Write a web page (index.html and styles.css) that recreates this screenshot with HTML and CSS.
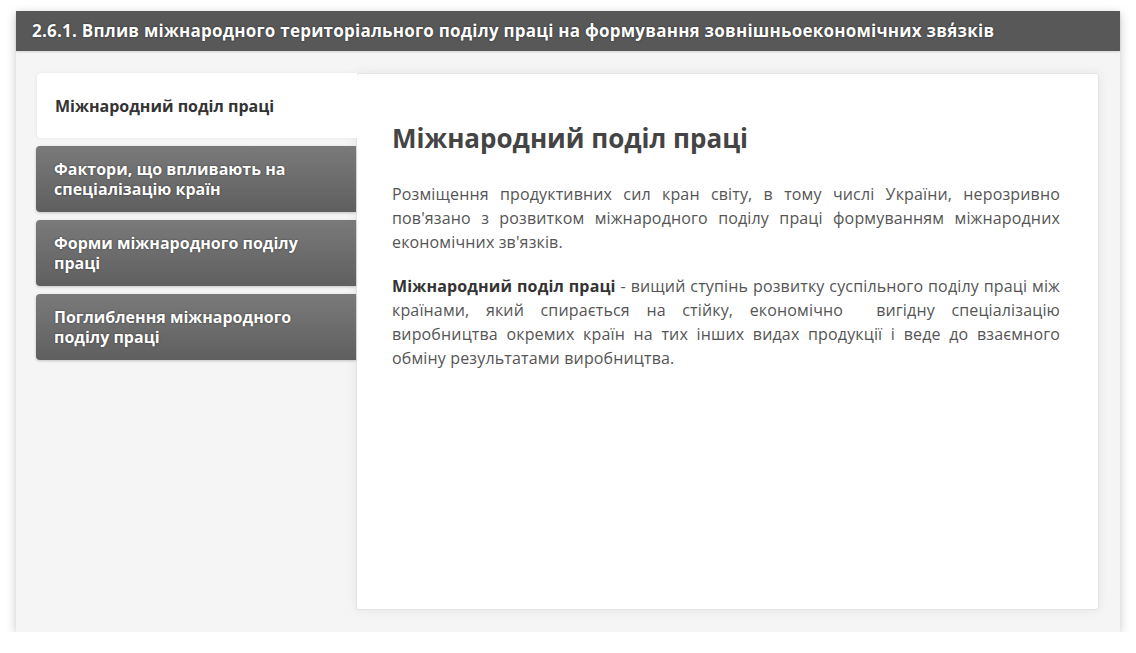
FILE: index.html
```html
<!DOCTYPE html>
<html lang="uk">
<head>
<meta charset="utf-8">
<title>Міжнародний поділ праці</title>
<link rel="stylesheet" href="styles.css">
</head>
<body>
<div class="frame">
  <div class="header">2.6.1. Вплив міжнародного територіального поділу праці на формування зовнішньоекономічних зв΄язків</div>
  <div class="body">
    <div class="tabs">
      <div class="tab active">Міжнародний поділ праці</div>
      <div class="tab">Фактори, що впливають на спеціалізацію країн</div>
      <div class="tab">Форми міжнародного поділу праці</div>
      <div class="tab">Поглиблення міжнародного поділу праці</div>
    </div>
    <div class="panel">
      <h1 class="title">Міжнародний поділ праці</h1>
      <p class="text">Розміщення продуктивних сил кран світу, в тому числі України, нерозривно пов'язано з розвитком міжнародного поділу праці формуванням міжнародних економічних зв'язків.</p>
      <p class="text"><b>Міжнародний поділ праці</b> - вищий ступінь розвитку суспільного поділу праці між країнами, який спирається на стійку, економічно&nbsp; вигідну спеціалізацію виробництва окремих країн на тих інших видах продукції і веде до взаємного обміну результатами виробництва.</p>
    </div>
  </div>
</div>
</body>
</html>
```

FILE: styles.css
```css
html, body {
  margin: 0;
  padding: 0;
  background: #ffffff;
}
body {
  padding: 11px 16px 0 16px;
  font-family: "Open Sans", "Noto Sans", sans-serif;
}
.frame {
  width: 1104px;
  height: 621px;
  background: #f5f5f5;
  box-shadow: 0 3px 10px rgba(0, 0, 0, 0.22);
  display: flex;
  flex-direction: column;
}
.header {
  height: 40px;
  background: #585858;
  color: #ffffff;
  font-weight: 700;
  font-size: 17px;
  letter-spacing: 0.23px;
  line-height: 40px;
  padding-left: 16px;
  text-shadow: 0 0 2px rgba(0, 0, 0, 0.6);
  white-space: nowrap;
  box-shadow: 0 1px 2px rgba(0,0,0,0.15);
}
.body {
  flex: 1;
  display: flex;
  padding: 22px 21px 22px 20px;
}
.tabs {
  width: 320px;
  display: flex;
  flex-direction: column;
  gap: 8px;
  position: relative;
  z-index: 2;
}
.tab {
  height: 66px;
  box-sizing: border-box;
  display: flex;
  align-items: center;
  padding: 0 20px 0 18px;
  font-weight: 700;
  font-size: 16px;
  line-height: 20px;
  color: #ffffff;
  text-shadow: 0 0 2px rgba(0, 0, 0, 0.55);
  background: linear-gradient(to bottom, #7a7a7a, #5f5f5f);
  border-radius: 4px 0 0 4px;
  box-shadow: 0 1px 3px rgba(0, 0, 0, 0.2);
}
.tab.active {
  height: 65px;
  margin-left: 1px;
  margin-right: -1px;
  background: #ffffff;
  color: #333333;
  text-shadow: none;
  box-shadow: -1px 0 3px rgba(0, 0, 0, 0.06);
}
.panel {
  flex: 1;
  background: #ffffff;
  border: 1px solid #e4e4e4;
  border-radius: 3px;
  box-shadow: 0 0 12px rgba(0, 0, 0, 0.07);
  padding: 47px 38px 20px 35px;
}
.title {
  margin: 0 0 27px 0;
  font-size: 26px;
  line-height: 34px;
  font-weight: 700;
  color: #444444;
}
.text {
  margin: 0 0 20px 0;
  font-size: 16px;
  line-height: 24px;
  letter-spacing: 0.15px;
  color: #555555;
  text-align: justify;
}
.text b {
  color: #333333;
}
```
